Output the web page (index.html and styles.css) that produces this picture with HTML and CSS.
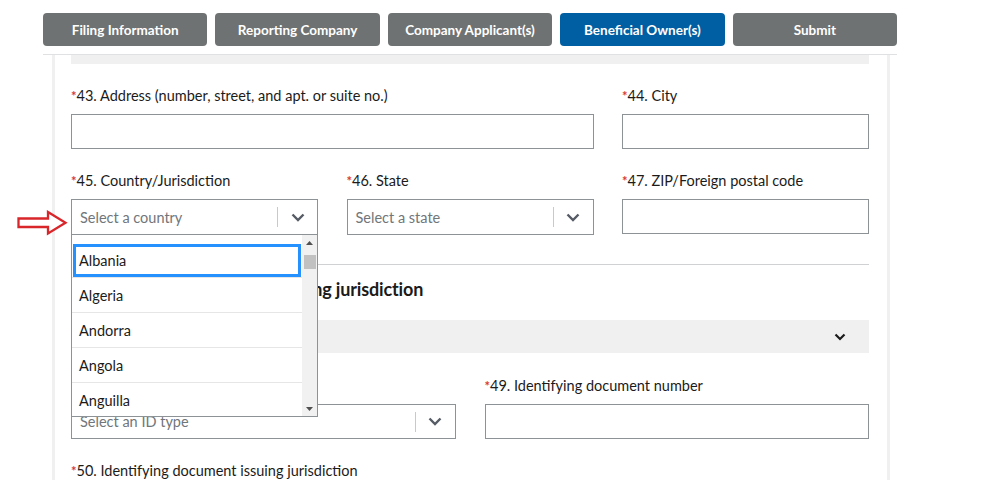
FILE: index.html
```html
<!DOCTYPE html>
<html lang="en">
<head>
<meta charset="utf-8">
<title>Beneficial Owner(s)</title>
<link rel="stylesheet" href="styles.css">
</head>
<body>
<nav class="steps">
  <button class="step">Filing Information</button>
  <button class="step">Reporting Company</button>
  <button class="step">Company Applicant(s)</button>
  <button class="step step-active">Beneficial Owner(s)</button>
  <button class="step">Submit</button>
</nav>

<svg class="pointer" width="52" height="26" viewBox="0 0 52 26" aria-hidden="true">
  <polygon points="1.5,8.5 31,8.5 31,2 48.5,12.8 31,23.5 31,17 1.5,17" fill="#fff" stroke="#d8262b" stroke-width="2.3" stroke-linejoin="miter"/>
</svg>

<main class="card">
  <div class="acc-tail"></div>

  <div class="grid3">
    <div class="field span2">
      <label class="label"><span class="req">*</span>43. Address (number, street, and apt. or suite no.)</label>
      <div class="input"></div>
    </div>
    <div class="field">
      <label class="label"><span class="req">*</span>44. City</label>
      <div class="input"></div>
    </div>

    <div class="field">
      <label class="label"><span class="req">*</span>45. Country/Jurisdiction</label>
      <div class="select-wrap">
        <div class="select">
          <span class="placeholder">Select a country</span>
          <span class="divider"></span>
          <span class="chev">
            <svg width="14" height="9" viewBox="0 0 14 9"><path d="M1.5 1.5 L7 7 L12.5 1.5" fill="none" stroke="#565c65" stroke-width="2.4"/></svg>
          </span>
        </div>
        <div class="dd">
          <ul class="dd-items">
            <li class="opt opt-focus">Albania</li>
            <li class="opt">Algeria</li>
            <li class="opt">Andorra</li>
            <li class="opt">Angola</li>
            <li class="opt">Anguilla</li>
            <li class="opt">Antarctica</li>
          </ul>
          <div class="dd-bar">
            <span class="sb-btn"><svg width="7" height="4" viewBox="0 0 7 4"><path d="M0 4 L3.5 0 L7 4Z" fill="#505050"/></svg></span>
            <span class="sb-thumb"></span>
            <span class="sb-space"></span>
            <span class="sb-btn"><svg width="7" height="4" viewBox="0 0 7 4"><path d="M0 0 L3.5 4 L7 0Z" fill="#505050"/></svg></span>
          </div>
        </div>
      </div>
    </div>
    <div class="field">
      <label class="label"><span class="req">*</span>46. State</label>
      <div class="select">
        <span class="placeholder">Select a state</span>
        <span class="divider"></span>
        <span class="chev">
          <svg width="14" height="9" viewBox="0 0 14 9"><path d="M1.5 1.5 L7 7 L12.5 1.5" fill="none" stroke="#565c65" stroke-width="2.4"/></svg>
        </span>
      </div>
    </div>
    <div class="field">
      <label class="label"><span class="req">*</span>47. ZIP/Foreign postal code</label>
      <div class="input"></div>
    </div>
  </div>

  <hr class="sep">

  <h2 class="heading">Form of identification and issuing jurisdiction</h2>

  <div class="acc-bar">
    <span class="acc-title"></span>
    <svg width="12" height="8" viewBox="0 0 12 8"><path d="M1.5 1.5 L6 6 L10.5 1.5" fill="none" stroke="#1b1b1b" stroke-width="2.2"/></svg>
  </div>

  <div class="grid2">
    <div class="field">
      <label class="label"><span class="req">*</span>48. Identifying document type</label>
      <div class="select">
        <span class="placeholder">Select an ID type</span>
        <span class="divider"></span>
        <span class="chev">
          <svg width="14" height="9" viewBox="0 0 14 9"><path d="M1.5 1.5 L7 7 L12.5 1.5" fill="none" stroke="#565c65" stroke-width="2.4"/></svg>
        </span>
      </div>
    </div>
    <div class="field">
      <label class="label"><span class="req">*</span>49. Identifying document number</label>
      <div class="input"></div>
    </div>
  </div>

  <div class="field single">
    <label class="label"><span class="req">*</span>50. Identifying document issuing jurisdiction</label>
    <div class="input"></div>
  </div>
</main>
</body>
</html>
```

FILE: styles.css
```css
* { box-sizing: border-box; }

html, body {
  margin: 0;
  padding: 0;
  background: #ffffff;
  font-family: "Lato", "Liberation Sans", sans-serif;
  color: #1b1b1b;
}

body { overflow: hidden; }

.steps {
  display: flex;
  gap: 8px;
  margin-left: 43px;
  width: 854px;
  padding-top: 13px;
  padding-bottom: 8px;
  border-bottom: 1px solid #dfe1e2;
}

.step {
  width: 164.5px;
  height: 33px;
  border: 0;
  border-radius: 4px;
  background: #6f7272;
  color: #ffffff;
  font-family: "Lato", "Liberation Sans", sans-serif;
  font-weight: 700;
  font-size: 13.5px;
  padding: 0;
}

.step-active { background: #005ea2; }

.pointer {
  position: absolute;
  left: 17px;
  top: 210px;
}

.card {
  margin-left: 52px;
  width: 838px;
  border-left: 3px solid #f0f0f0;
  border-right: 3px solid #f0f0f0;
  padding: 0 18px 40px 16px;
}

.acc-tail {
  height: 9px;
  background: #f0f0f0;
}

.grid3 {
  display: grid;
  grid-template-columns: repeat(3, 1fr);
  column-gap: 28.5px;
  row-gap: 22px;
  margin-top: 22px;
}

.grid2 {
  display: grid;
  grid-template-columns: repeat(2, 1fr);
  column-gap: 29px;
  margin-top: 23px;
}

.span2 { grid-column: span 2; }

.field { display: flex; flex-direction: column; }

.single { margin-top: 22px; }

.label {
  font-size: 14.5px;
  line-height: 20px;
  color: #1b1b1b;
  margin-bottom: 8px;
  white-space: nowrap;
}

.req {
  color: #d83933;
  font-size: 13px;
  font-weight: 700;
}

.input {
  height: 35px;
  border: 1px solid #8d9297;
  background: #fff;
}

.select-wrap { position: relative; }

.select {
  height: 36px;
  border: 1px solid #8d9297;
  background: #fff;
  display: flex;
  align-items: center;
}

.grid2 .select { height: 35px; }

.placeholder {
  flex: 1;
  padding-left: 8px;
  font-size: 14.5px;
  color: #71767a;
}

.divider {
  width: 1px;
  height: 20px;
  background: #c6cace;
}

.chev {
  width: 39px;
  display: flex;
  justify-content: center;
  align-items: center;
}

.dd {
  position: absolute;
  left: 0;
  top: 100%;
  width: 100%;
  height: 182px;
  background: #fff;
  border: 1px solid #8d9297;
  border-top: 0;
  display: flex;
  z-index: 5;
}

.dd-items {
  list-style: none;
  margin: 0;
  padding: 8px 0 0 0;
  flex: 1;
  overflow: hidden;
}

.opt {
  height: 35px;
  padding-left: 7px;
  display: flex;
  align-items: center;
  font-size: 14.5px;
  color: #1b1b1b;
  border-bottom: 1px solid #e6e6e6;
}

.opt-focus {
  outline: 3px solid #2491ff;
  outline-offset: -4px;
}

.dd-bar {
  width: 15px;
  background: #f1f1f1;
  display: flex;
  flex-direction: column;
  align-items: center;
}

.sb-btn {
  width: 15px;
  height: 15px;
  display: flex;
  align-items: center;
  justify-content: center;
}

.sb-thumb {
  width: 12px;
  height: 14px;
  margin-top: 5px;
  background: #c1c1c1;
}

.sb-space { flex: 1; }

.sep {
  border: 0;
  border-top: 1px solid #cfd1d3;
  margin: 29px 0 0 0;
}

.heading {
  margin: 12px 0 0 0;
  font-size: 18px;
  line-height: 24px;
  font-weight: 700;
  letter-spacing: -0.15px;
  color: #1b1b1b;
}

.acc-bar {
  margin-top: 19px;
  height: 33px;
  background: #f0f0f0;
  display: flex;
  align-items: center;
  justify-content: space-between;
  padding: 0 23px 0 16px;
}
```
